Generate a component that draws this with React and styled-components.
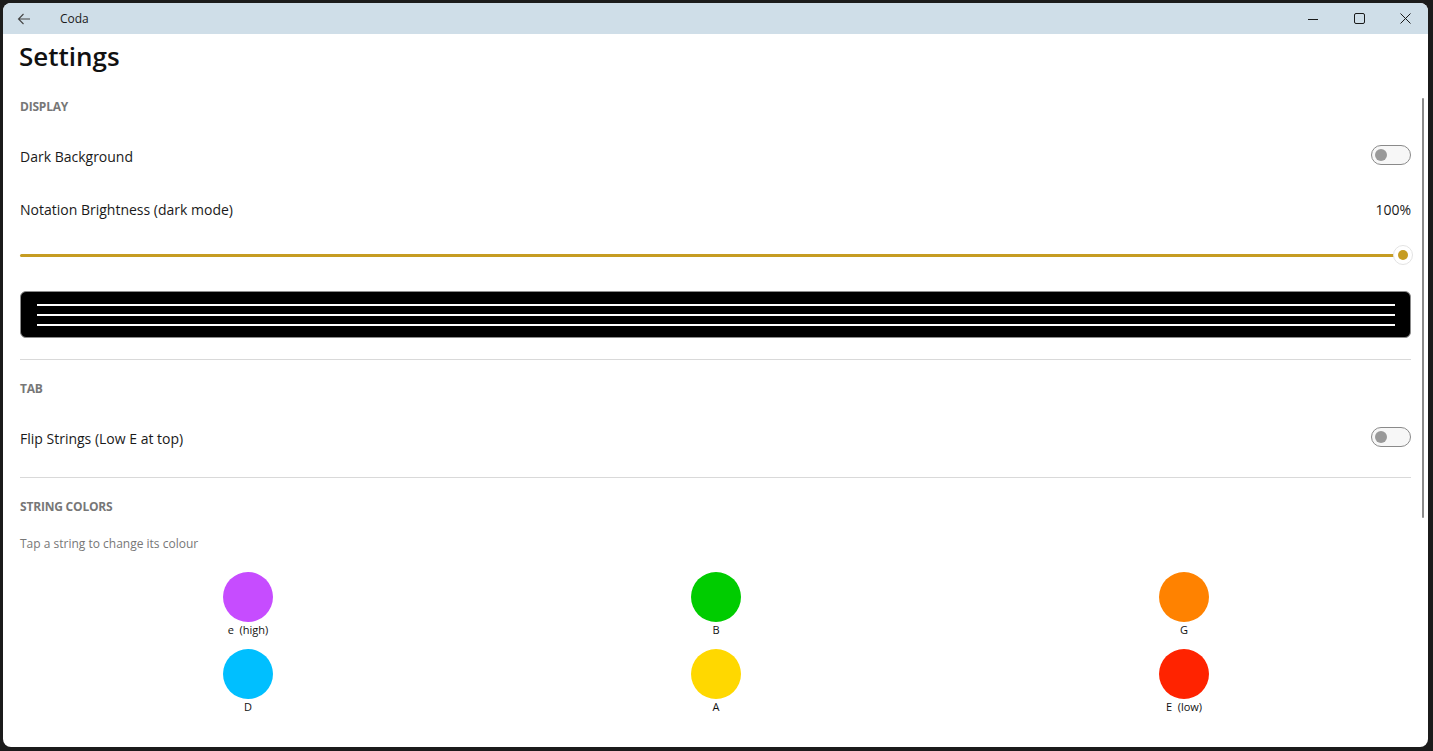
import React from "react";
import styled, { createGlobalStyle } from "styled-components";

const Global = createGlobalStyle`
  html, body { margin: 0; padding: 0; background: #1b1b1b; }
  body { font-family: "Open Sans", "Noto Sans", sans-serif; }
  * { box-sizing: border-box; }
`;

const Screen = styled.div`
  width: 1433px;
  height: 751px;
  padding: 3px 5px 4px 3px;
  background: #1b1b1b;
`;

const Window = styled.div`
  position: relative;
  width: 100%;
  height: 100%;
  background: #ffffff;
  border-radius: 8px;
  overflow: hidden;
  display: flex;
  flex-direction: column;
`;

const TitleBar = styled.div`
  height: 31px;
  flex: none;
  background: #cfdee8;
  display: flex;
  align-items: center;
`;

const BackButton = styled.div`
  width: 42px;
  height: 31px;
  display: flex;
  align-items: center;
  justify-content: center;
  color: #444;
`;

const AppName = styled.span`
  margin-left: 15px;
  font-size: 12px;
  color: #1a1a1a;
  flex: 1;
`;

const CtrlButton = styled.div`
  width: 46px;
  height: 31px;
  display: flex;
  align-items: center;
  justify-content: center;
  color: #1a1a1a;
`;

const Content = styled.div`
  flex: 1;
  padding: 0 17px;
  display: flex;
  flex-direction: column;
`;

const Title = styled.h1`
  margin: 0;
  height: 44px;
  line-height: 44px;
  font-size: 26px;
  font-weight: 600;
  color: #111;
  margin-left: -1px;
`;

const SectionLabel = styled.div`
  margin-top: 18px;
  height: 22px;
  line-height: 22px;
  font-size: 12px;
  font-weight: 700;
  color: #777;
  letter-spacing: -0.2px;
`;

const Row = styled.div`
  height: ${(p) => p.$h}px;
  margin-top: ${(p) => p.$mt || 0}px;
  display: flex;
  align-items: center;
  justify-content: space-between;
  font-size: 14px;
  color: #1a1a1a;
`;

const Toggle = styled.div`
  width: 40px;
  height: 20px;
  margin-top: -2px;
  border: 1px solid #8a8a8a;
  border-radius: 10px;
  background: #f7f7f7;
  display: flex;
  align-items: center;
  padding-left: 3px;
`;

const Knob = styled.div`
  width: 12px;
  height: 12px;
  border-radius: 50%;
  background: #999;
`;

const SliderWrap = styled.div`
  position: relative;
  margin-top: 1px;
  height: 42px;
  display: flex;
  align-items: center;
`;

const Track = styled.div`
  height: 3px;
  width: 100%;
  background: #c69c22;
  border-radius: 2px;
  margin-right: 8px;
`;

const Thumb = styled.div`
  position: absolute;
  right: -2px;
  top: 50%;
  width: 20px;
  height: 20px;
  margin-top: -10px;
  border-radius: 50%;
  background: #fff;
  border: 1px solid #e3e3e3;
  display: flex;
  align-items: center;
  justify-content: center;
  &::after {
    content: "";
    width: 10px;
    height: 10px;
    border-radius: 50%;
    background: #c69c22;
  }
`;

const Preview = styled.div`
  margin-top: 15px;
  height: 47px;
  background: #000;
  border: 1px solid #8c8c8c;
  border-radius: 6px;
  padding: 12px 15px 0 16px;
  display: flex;
  flex-direction: column;
  gap: 8px;
`;

const StaffLine = styled.div`
  height: 2px;
  background: #fff;
`;

const Divider = styled.div`
  margin-top: ${(p) => p.$mt}px;
  height: 1px;
  background: #d9d9d9;
`;

const Hint = styled.div`
  margin-top: 16px;
  height: 20px;
  line-height: 20px;
  font-size: 12px;
  color: #777;
`;

const Swatches = styled.div`
  margin: 18px -7px 0 -6px;
  display: grid;
  grid-template-columns: repeat(3, 1fr);
  row-gap: 11px;
`;

const Swatch = styled.div`
  display: flex;
  flex-direction: column;
  align-items: center;
`;

const Dot = styled.div`
  width: 50px;
  height: 50px;
  border-radius: 50%;
  background: ${(p) => p.$c};
`;

const SwatchLabel = styled.div`
  height: 16px;
  line-height: 16px;
  font-size: 11px;
  color: #111;
  white-space: pre;
`;

const Scrollbar = styled.div`
  position: absolute;
  right: 4px;
  top: 95px;
  width: 2px;
  height: 420px;
  background: #8a8a8a;
  border-radius: 1px;
`;

const strings = [
  { name: "e  (high)", c: "#c64cff" },
  { name: "B", c: "#00cc00" },
  { name: "G", c: "#ff8200" },
  { name: "D", c: "#00bfff" },
  { name: "A", c: "#ffd800" },
  { name: "E  (low)", c: "#ff2300" },
];

export default function App() {
  return (
    <>
      <Global />
      <Screen>
        <Window>
          <TitleBar>
            <BackButton>
              <svg width="14" height="14" viewBox="0 0 14 14" fill="none" stroke="currentColor" strokeWidth="1.1">
                <path d="M13 7H1.5M6.5 2L1.5 7l5 5" />
              </svg>
            </BackButton>
            <AppName>Coda</AppName>
            <CtrlButton>
              <svg width="10" height="10" viewBox="0 0 10 10" stroke="currentColor" strokeWidth="1">
                <path d="M0 5.5h10" />
              </svg>
            </CtrlButton>
            <CtrlButton>
              <svg width="11" height="11" viewBox="0 0 11 11" fill="none" stroke="currentColor" strokeWidth="1">
                <rect x="0.5" y="0.5" width="10" height="10" rx="1.5" />
              </svg>
            </CtrlButton>
            <CtrlButton>
              <svg width="11" height="11" viewBox="0 0 11 11" fill="none" stroke="currentColor" strokeWidth="1">
                <path d="M0.5 0.5l10 10M10.5 0.5l-10 10" />
              </svg>
            </CtrlButton>
          </TitleBar>
          <Content>
            <Title>Settings</Title>
            <SectionLabel>DISPLAY</SectionLabel>
            <Row $h={58} $mt={9}>
              <span>Dark Background</span>
              <Toggle><Knob /></Toggle>
            </Row>
            <Row $h={48}>
              <span>Notation Brightness (dark mode)</span>
              <span>100%</span>
            </Row>
            <SliderWrap>
              <Track />
              <Thumb />
            </SliderWrap>
            <Preview>
              <StaffLine />
              <StaffLine />
              <StaffLine />
            </Preview>
            <Divider $mt={21} />
            <SectionLabel>TAB</SectionLabel>
            <Row $h={58} $mt={9}>
              <span>Flip Strings (Low E at top)</span>
              <Toggle><Knob /></Toggle>
            </Row>
            <Divider $mt={10} />
            <SectionLabel>STRING COLORS</SectionLabel>
            <Hint>Tap a string to change its colour</Hint>
            <Swatches>
              {strings.map((s) => (
                <Swatch key={s.name}>
                  <Dot $c={s.c} />
                  <SwatchLabel>{s.name}</SwatchLabel>
                </Swatch>
              ))}
            </Swatches>
          </Content>
          <Scrollbar />
        </Window>
      </Screen>
    </>
  );
}
